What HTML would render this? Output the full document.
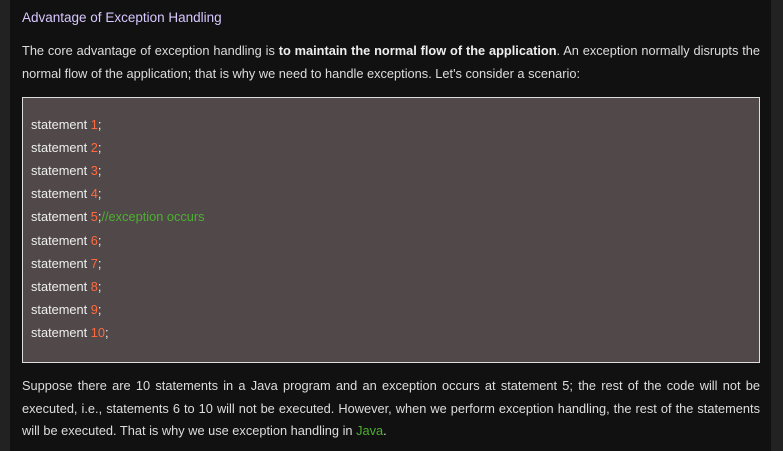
<!DOCTYPE html>
<html><head><style>
body{margin:0;width:783px;height:451px;background:#222;font-family:"Liberation Sans",sans-serif;overflow:hidden}
.main{position:absolute;left:10px;top:0;width:761px;height:451px;background:#111}
.h{position:absolute;left:12px;top:10px;font-size:13.5px;color:#d8c8ff}
p{position:absolute;left:12px;width:738px;margin:0;font-size:12.8px;line-height:22.5px;color:#ddd;text-align:justify}
b{color:#eee}
.code{position:absolute;left:12px;top:97px;width:736px;height:264px;background:#514949;border:1px solid #ddd;color:#eee;font-size:12.8px}
.code div{position:absolute;left:8px;height:23px}
.n{color:#ff6a3d}.c{color:#4cb030}.g{color:#4cb030}
</style></head><body><div class="main">
<div class="h">Advantage of Exception Handling</div>
<p style="top:40px">The core advantage of exception handling is <b>to maintain the normal flow of the application</b>. An exception normally disrupts the normal flow of the application; that is why we need to handle exceptions. Let's consider a scenario:</p>
<div class="code">
<div style="top:19px">statement <span class="n">1</span>;</div>
<div style="top:42px">statement <span class="n">2</span>;</div>
<div style="top:65px">statement <span class="n">3</span>;</div>
<div style="top:88px">statement <span class="n">4</span>;</div>
<div style="top:111px">statement <span class="n">5</span>;<span class="c">//exception occurs</span></div>
<div style="top:135px">statement <span class="n">6</span>;</div>
<div style="top:158px">statement <span class="n">7</span>;</div>
<div style="top:181px">statement <span class="n">8</span>;</div>
<div style="top:204px">statement <span class="n">9</span>;</div>
<div style="top:227px">statement <span class="n">10</span>;</div>
</div>
<p style="top:375px">Suppose there are 10 statements in a Java program and an exception occurs at statement 5; the rest of the code will not be executed, i.e., statements 6 to 10 will not be executed. However, when we perform exception handling, the rest of the statements will be executed. That is why we use exception handling in <span class="g">Java</span>.</p>
</div></body></html>
